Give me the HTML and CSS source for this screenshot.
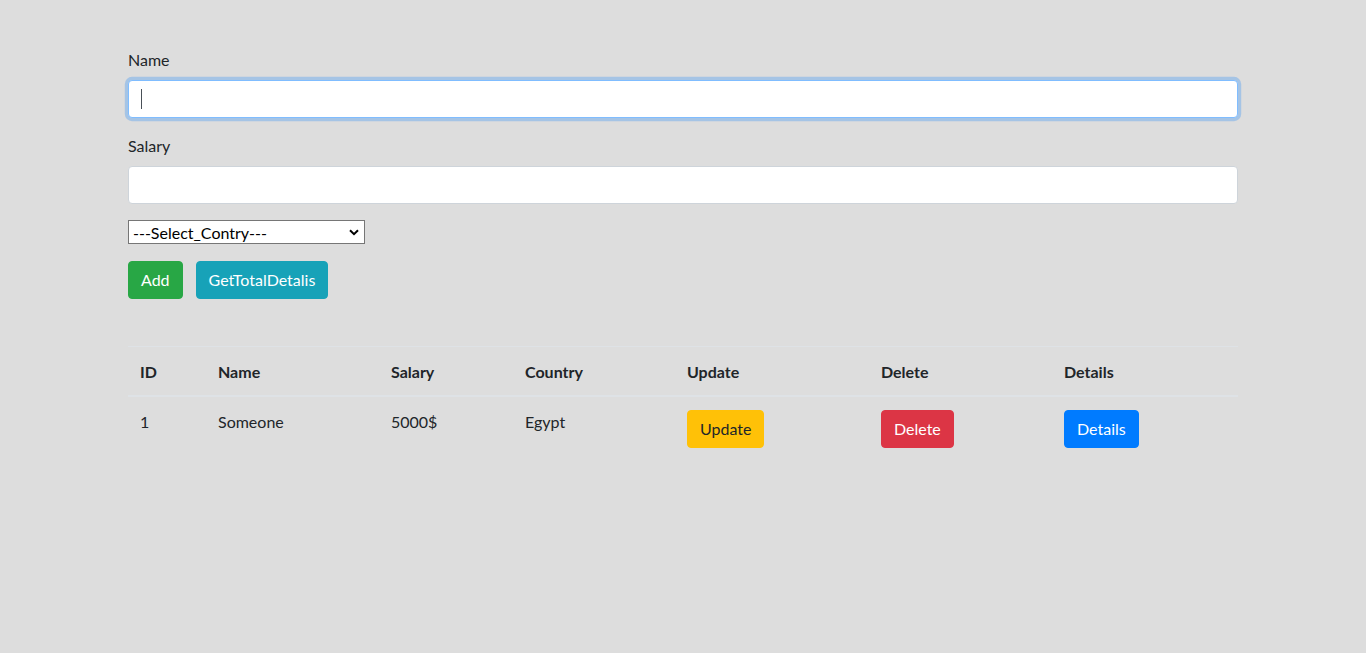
FILE: index.html
```html
<!DOCTYPE html>
<html lang="en">
<head>
<meta charset="utf-8">
<title>Employees</title>
<link rel="stylesheet" href="styles.css">
</head>
<body>
<div class="container">
  <div class="form-group">
    <label class="form-label" for="name">Name</label>
    <div class="input-wrap">
      <input id="name" class="form-control is-focus" type="text">
      <span class="caret"></span>
    </div>
  </div>
  <div class="form-group">
    <label class="form-label" for="salary">Salary</label>
    <input id="salary" class="form-control" type="text">
  </div>
  <div class="select-group">
    <span class="select-wrap">
      <select class="country-select">
        <option>---Select_Contry---</option>
        <option>Egypt</option>
      </select>
      <svg class="select-arrow" width="10" height="7" viewBox="0 0 10 7"><path d="M1 1.2 L5 5.2 L9 1.2" fill="none" stroke="#000" stroke-width="2"/></svg>
    </span>
  </div>
  <div class="actions">
    <button class="btn btn-success">Add</button>
    <button class="btn btn-info">GetTotalDetalis</button>
  </div>

  <table class="table">
    <thead>
      <tr>
        <th class="c-id">ID</th>
        <th class="c-name">Name</th>
        <th class="c-salary">Salary</th>
        <th class="c-country">Country</th>
        <th class="c-update">Update</th>
        <th class="c-delete">Delete</th>
        <th class="c-details">Details</th>
      </tr>
    </thead>
    <tbody>
      <tr>
        <td>1</td>
        <td>Someone</td>
        <td>5000$</td>
        <td>Egypt</td>
        <td><button class="btn btn-warning">Update</button></td>
        <td><button class="btn btn-danger">Delete</button></td>
        <td><button class="btn btn-primary">Details</button></td>
      </tr>
    </tbody>
  </table>
</div>
</body>
</html>
```
FILE: styles.css
```css
* { box-sizing: border-box; }
html, body { margin: 0; padding: 0; }
body {
  background: #dddddd;
  color: #212529;
  font-family: Lato, "Liberation Sans", sans-serif;
  font-size: 16px;
  line-height: 24px;
}
.container {
  width: 1140px;
  margin: 0 auto;
  padding: 48px 15px 0;
}
.form-group { margin-bottom: 16px; }
.form-label { display: inline-block; margin-bottom: 8px; }
.input-wrap { position: relative; }
.caret {
  position: absolute;
  left: 13px;
  top: 9px;
  width: 1px;
  height: 20px;
  background: #495057;
}
.form-control {
  display: block;
  width: 100%;
  height: 38px;
  padding: 6px 12px;
  font: inherit;
  color: #495057;
  background: #fff;
  border: 1px solid #ced4da;
  border-radius: 4px;
  outline: none;
}
.form-control.is-focus, .form-control:focus {
  border-color: #80bdff;
  box-shadow: 0 0 0 3.2px rgba(0,123,255,.25);
}
.select-group { margin-bottom: 17px; height: 24px; }
.select-wrap { position: relative; display: inline-block; }
.country-select {
  -webkit-appearance: none;
  appearance: none;
  width: 237px;
  height: 24px;
  padding: 0 20px 0 4px;
  font-family: inherit;
  font-size: 16px;
  color: #000;
  background: #fff;
  border: 1px solid #767676;
  border-radius: 0;
  display: block;
}
.select-arrow { position: absolute; right: 6px; top: 9px; pointer-events: none; }
.actions { display: flex; gap: 13px; margin-bottom: 47px; }
.btn {
  display: inline-block;
  height: 38px;
  padding: 6px 12px;
  font: inherit;
  border: 1px solid transparent;
  border-radius: 4px;
  color: #fff;
  cursor: pointer;
}
.btn-success { background: #28a745; border-color: #28a745; }
.btn-info { background: #17a2b8; border-color: #17a2b8; }
.btn-warning { background: #ffc107; border-color: #ffc107; color: #212529; }
.btn-danger { background: #dc3545; border-color: #dc3545; }
.btn-primary { background: #007bff; border-color: #007bff; }
.table {
  width: 100%;
  border-collapse: collapse;
  table-layout: fixed;
}
.table th, .table td {
  padding: 12px;
  text-align: left;
  vertical-align: top;
  border-top: 1px solid #dee2e6;
}
.table th { font-weight: 700; border-bottom: 2px solid #dee2e6; padding-top: 13px; padding-bottom: 11px; }
.table td { padding-top: 13px; }
.c-id { width: 78px; }
.c-name { width: 173px; }
.c-salary { width: 134px; }
.c-country { width: 162px; }
.c-update { width: 194px; }
.c-delete { width: 183px; }
.c-details { width: 186px; }
```
